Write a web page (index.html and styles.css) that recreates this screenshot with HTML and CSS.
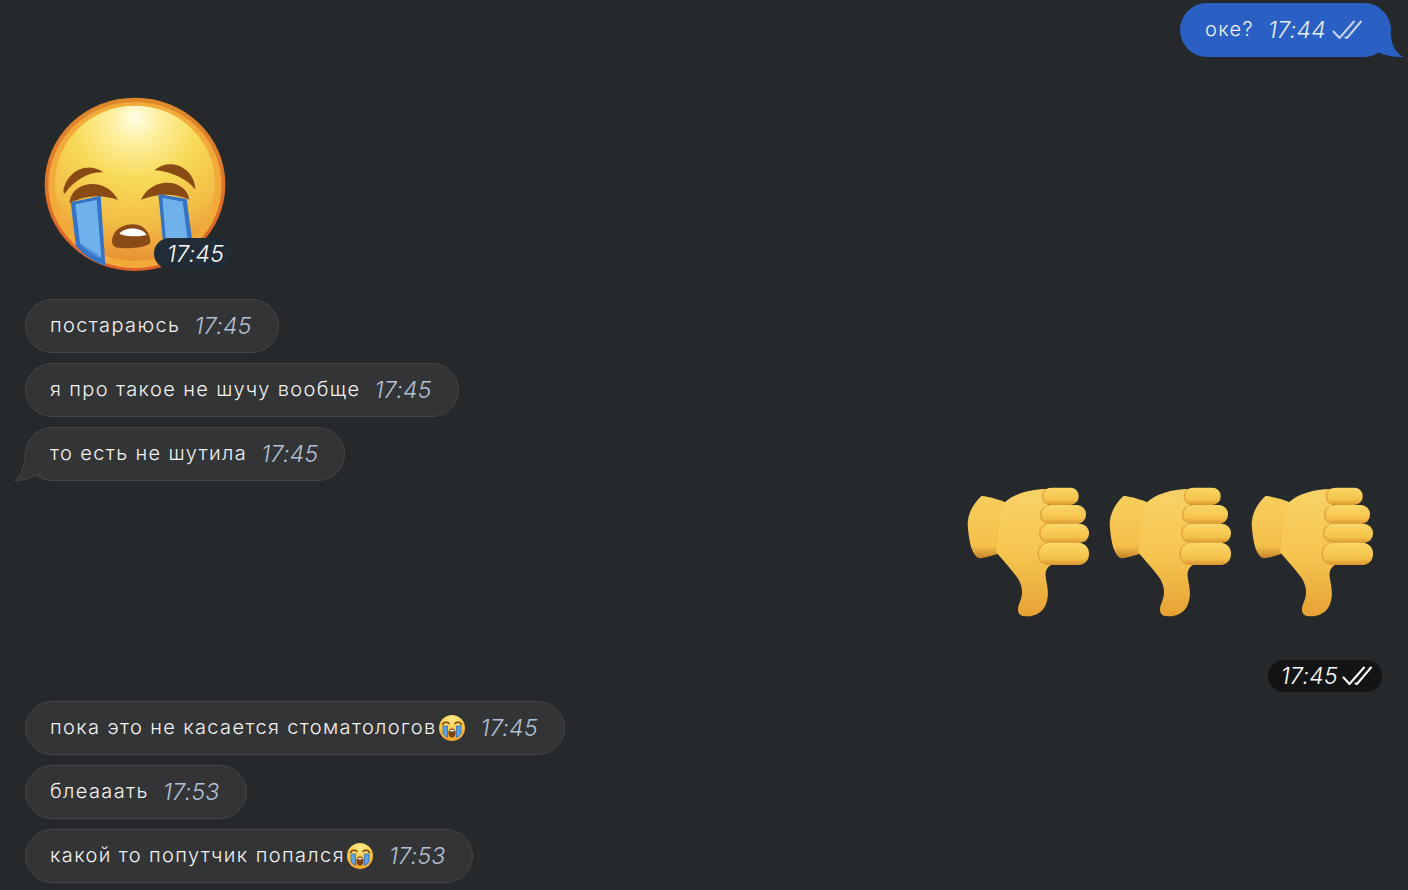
FILE: index.html
```html
<!DOCTYPE html>
<html lang="ru">
<head>
	<meta charset="utf-8"/>
	<title>Чат</title>
	<link rel="stylesheet" href="styles.css">
</head>

<body>
	<svg class="defs" width="0" height="0">
		<defs>
			<radialGradient id="faceFill" cx="50%" cy="8%" r="95%">
				<stop offset="0" stop-color="#fffde6"/>
				<stop offset=".16" stop-color="#fdf0a0"/>
				<stop offset=".42" stop-color="#f8da58"/>
				<stop offset=".72" stop-color="#f2bd46"/>
				<stop offset="1" stop-color="#e88c30"/>
			</radialGradient>
			<linearGradient id="faceRim" x1="0" y1="0" x2="0" y2="1">
				<stop offset="0" stop-color="#e08a2c"/>
				<stop offset="1" stop-color="#dd5f28"/>
			</linearGradient>
			<linearGradient id="fingerFill" x1="0" y1="0" x2="0" y2="1">
				<stop offset="0" stop-color="#fbd768"/>
				<stop offset=".7" stop-color="#f5c24a"/>
				<stop offset="1" stop-color="#d99530"/>
			</linearGradient>
			<linearGradient id="handFill" x1="0" y1="0" x2="0" y2="1">
				<stop offset="0" stop-color="#f8d267"/>
				<stop offset=".5" stop-color="#f6c650"/>
				<stop offset="1" stop-color="#e6a234"/>
			</linearGradient>
			<linearGradient id="wristFill" x1="0" y1="0" x2="0" y2="1">
				<stop offset="0" stop-color="#f7cd5c"/>
				<stop offset=".8" stop-color="#f4c04a"/>
				<stop offset="1" stop-color="#c58227"/>
			</linearGradient>
			<radialGradient id="miniFace" cx="50%" cy="15%" r="90%">
				<stop offset="0" stop-color="#fde98a"/>
				<stop offset=".6" stop-color="#f8c63e"/>
				<stop offset="1" stop-color="#ec9a26"/>
			</radialGradient>
			<symbol id="thumb" viewBox="0 0 450 450">
				<path fill="url(#wristFill)" d="M80 62C105 66 130 72 160 85L170 222C140 232 100 248 72 250C50 240 42 200 38 150C38 115 55 85 80 62Z"/>
				<path fill="url(#handFill)" d="M150 82C175 58 225 42 275 42L300 265C278 272 270 285 272 305C276 335 285 355 272 390C262 415 232 428 205 423C188 420 186 402 192 388C204 360 205 340 190 312C175 290 150 262 122 230C135 200 125 130 150 82Z"/>
				<g fill="#dd9c34" opacity=".75">
					<rect x="260" y="39" width="60" height="51" rx="24"/>
					<rect x="255" y="91" width="60" height="56" rx="26"/>
					<rect x="252" y="146" width="60" height="58" rx="27"/>
					<rect x="247" y="203" width="60" height="67" rx="32"/>
				</g>
				<g fill="url(#fingerFill)">
					<rect x="265" y="38" width="106" height="52" rx="25"/>
					<rect x="260" y="90" width="133" height="57" rx="27"/>
					<rect x="257" y="146" width="145" height="58" rx="28"/>
					<rect x="252" y="203" width="150" height="67" rx="32"/>
				</g>
			</symbol>
			<symbol id="cry" viewBox="0 0 26 26">
				<circle cx="13" cy="13" r="13" fill="url(#miniFace)"/>
				<path d="M3.500 9.500C5 7 8 6.500 10 8.500M16 8.500C18 6.500 21 7 22.500 9.500" fill="none" stroke="#7a4210" stroke-width="1.600" stroke-linecap="round"/>
				<path d="M4 11H8.500V22.500C6.500 21.500 5 20 4 18.500ZM17.500 11H22V18.500C21 20 19.500 21.500 17.500 22.500Z" fill="#5ea3e6" stroke="#2f6cc0" stroke-width=".8"/>
				<ellipse cx="13" cy="18" rx="3.600" ry="4.500" fill="#7a4210"/>
				<path d="M10.200 15.800C11.500 14.500 14.500 14.500 15.800 15.800C14 16.800 12 16.800 10.200 15.800Z" fill="#fff"/>
			</symbol>
			<symbol id="ticks" viewBox="0 0 30 20">
				<path d="M1.500 11.500L7.500 18L22 1.500M13.500 17.500L15 18L29 1.500" fill="none" stroke="currentColor" stroke-width="2" stroke-linecap="round" stroke-linejoin="round"/>
			</symbol>
		</defs>
	</svg>

	<div class="chat">
		<div class="row row-out">
			<div class="bubble bubble-out">
				<span class="text">оке?</span>
				<span class="time time-out">17:44</span>
				<svg class="ticks ticks-out"><use href="#ticks"/></svg>
				<svg class="tail tail-out" viewBox="0 0 28 22"><path d="M13 0H15C15 8 19 18 27.500 22C19 22 8 21 2 17Z" fill="#2a60c4"/></svg>
			</div>
		</div>

		<div class="sticker">
			<svg class="sticker-face" viewBox="0 0 660 585">
				<ellipse cx="315" cy="298" rx="271" ry="260" fill="url(#faceRim)"/>
				<ellipse cx="315" cy="300" rx="260" ry="249" fill="#f2ab3a"/>
				<ellipse cx="315" cy="295" rx="240" ry="233" fill="url(#faceFill)"/>
				<path d="M100 322C104 268 165 224 220 262C180 260 135 282 104 326Z" fill="#8a4a14"/>
				<path d="M373 256C420 214 495 248 496 314C470 280 420 258 373 256Z" fill="#8a4a14"/>
				<path d="M118 354C125 285 230 275 264 345C210 326 165 332 118 354Z" fill="#8a4a14"/>
				<path d="M333 344C365 272 470 280 478 344C430 322 380 326 333 344Z" fill="#8a4a14"/>
				<path d="M122 352L212 332L226 542C190 530 160 510 138 482Z" fill="#3474c6"/>
				<path d="M136 358L200 345L214 520C186 510 165 495 150 475Z" fill="#6fb1ea"/>
				<path d="M155 478L212 515V520C186 510 165 495 155 478Z" fill="#4a8fd8"/>
				<path d="M385 327L470 342L487 470L400 480Z" fill="#3474c6"/>
				<path d="M397 338L458 350L473 465L408 470Z" fill="#6fb1ea"/>
				<path d="M246 466C250 430 285 417 312 418C340 420 360 440 361 470C362 488 290 492 262 488C250 486 246 478 246 466Z" fill="#8a4a14"/>
				<path d="M268 446C285 425 335 425 350 450C325 456 290 456 268 446Z" fill="#fff"/>
			</svg>
			<span class="time-pill time-pill-sticker">17:45</span>
		</div>

		<div class="bubble bubble-in">
			<span class="text">постараюсь</span>
			<span class="time">17:45</span>
		</div>
		<div class="bubble bubble-in">
			<span class="text">я про такое не шучу вообще</span>
			<span class="time">17:45</span>
		</div>
		<div class="bubble bubble-in">
			<span class="text">то есть не шутила</span>
			<span class="time">17:45</span>
			<svg class="tail tail-in" viewBox="0 0 36 32"><path d="M11 3C11 14 8 25 .5 30.500C8 31 17 28 24 24C27 26 30 28 33 29.500Z" fill="#333435"/><path d="M11 3C11 14 8 25 .5 30.500C8 31 17 28 24 24C27 26 30 28 33 29.500" fill="none" stroke="#434548"/></svg>
		</div>

		<div class="thumbs">
			<svg class="thumb"><use href="#thumb"/></svg>
			<svg class="thumb"><use href="#thumb"/></svg>
			<svg class="thumb"><use href="#thumb"/></svg>
		</div>
		<div class="row row-out">
			<span class="time-pill time-pill-dark">17:45<svg class="ticks ticks-white"><use href="#ticks"/></svg></span>
		</div>

		<div class="bubble bubble-in bubble-after-pill">
			<span class="text">пока это не касается стоматологов<svg class="mini"><use href="#cry"/></svg></span>
			<span class="time">17:45</span>
		</div>
		<div class="bubble bubble-in">
			<span class="text">блеааать</span>
			<span class="time">17:53</span>
		</div>
		<div class="bubble bubble-in">
			<span class="text">какой то попутчик попался<svg class="mini"><use href="#cry"/></svg></span>
			<span class="time">17:53</span>
		</div>
	</div>
</body>
</html>
```

FILE: styles.css
```css
* {
	box-sizing: border-box;
}
html, body {
	height: 100%;
}
body {
	margin: 0;
	overflow: hidden;
	background-color: #26292b;
	font-family: 'Inter', 'Liberation Sans', sans-serif;
	color: #f2f2f2;
}
.defs {
	display: block;
	height: 0;
}
.chat {
	display: flex;
	flex-direction: column;
	align-items: flex-start;
	gap: 10px;
	padding: 3px 17px 0 25px;
}
.row {
	display: flex;
	width: 100%;
}
.row-out {
	justify-content: flex-end;
}
.bubble {
	position: relative;
	display: flex;
	align-items: center;
	height: 54px;
	padding: 0 26px 0 24px;
	border-radius: 27px;
	font-size: 20px;
}
.bubble-in {
	background-color: #333435;
	border: 1px solid #434548;
}
.bubble-out {
	background-color: #2a60c4;
	padding-left: 25px;
	padding-right: 29px;
}
.bubble-after-pill {
	margin-top: -1px;
}
.text {
	display: flex;
	align-items: center;
	padding-bottom: 2px;
	font-weight: 350;
	letter-spacing: 1.38px;
	white-space: nowrap;
}
.time {
	margin-left: 14px;
	font-size: 23px;
	font-style: italic;
	font-weight: 300;
	letter-spacing: 0.3px;
	color: #b2c1d4;
	white-space: nowrap;
}
.time-out {
	color: #e6edfa;
}
.ticks {
	width: 30px;
	height: 20px;
	flex: none;
}
.ticks-out {
	margin-left: 6px;
	color: #c4d4f0;
}
.ticks-white {
	margin-left: 4px;
	color: #fff;
}
.tail {
	position: absolute;
	display: block;
}
.tail-out {
	right: -13px;
	bottom: 0;
	width: 28px;
	height: 22px;
}
.tail-in {
	left: -12px;
	bottom: -2px;
	width: 36px;
	height: 32px;
}
.sticker {
	position: relative;
	width: 220px;
	height: 195px;
	margin: 18px 0 9px 5px;
}
.sticker-face {
	display: block;
	width: 220px;
	height: 195px;
}
.time-pill {
	display: inline-flex;
	align-items: center;
	font-size: 23px;
	font-style: italic;
	font-weight: 300;
	letter-spacing: 0.3px;
	color: #fff;
	white-space: nowrap;
}
.time-pill-sticker {
	position: absolute;
	left: 124px;
	top: 153px;
	height: 31px;
	padding: 0 7px 0 13px;
	border-radius: 16px;
	background-color: #222c36;
}
.time-pill-dark {
	height: 32px;
	margin-right: 9px;
	padding: 0 10px 0 13px;
	border-radius: 16px;
	background-color: #121415;
}
.thumbs {
	display: flex;
	align-self: flex-end;
	margin: -16px 2px 25px 0;
}
.thumb {
	display: block;
	width: 150px;
	height: 150px;
	margin-left: -8px;
}
.mini {
	display: block;
	width: 26px;
	height: 26px;
	margin: 2px 2px 0;
}
```
